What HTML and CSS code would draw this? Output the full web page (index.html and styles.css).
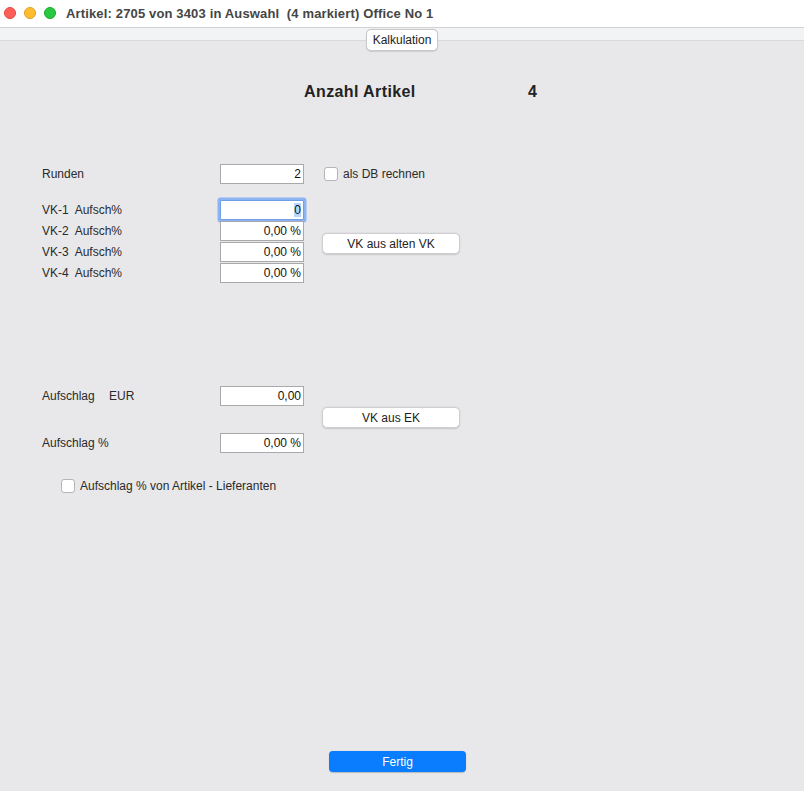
FILE: index.html
```html
<!DOCTYPE html>
<html lang="de">
<head>
<meta charset="utf-8">
<title>Kalkulation</title>
<link rel="stylesheet" href="styles.css">
</head>
<body>
<div class="window">
  <header class="titlebar">
    <div class="lights">
      <span class="light red"></span>
      <span class="light yellow"></span>
      <span class="light green"></span>
    </div>
    <div class="title">Artikel: 2705 von 3403 in Auswahl&nbsp; (4 markiert) Office No 1</div>
  </header>
  <div class="tabbar">
    <button class="tab">Kalkulation</button>
  </div>
  <main class="content">
    <div class="count">
      <span class="count-label">Anzahl Artikel</span>
      <span class="count-value">4</span>
    </div>

    <div class="row">
      <span class="label">Runden</span>
      <div class="field">2</div>
      <label class="check inline">
        <span class="box"></span>
        <span>als DB rechnen</span>
      </label>
    </div>

    <div class="grid vk">
      <span class="label">VK-1&nbsp; Aufsch%</span>
      <div class="field focus"><span class="sel">0</span></div>
      <span class="label">VK-2&nbsp; Aufsch%</span>
      <div class="field">0,00 %</div>
      <span class="label">VK-3&nbsp; Aufsch%</span>
      <div class="field">0,00 %</div>
      <span class="label">VK-4&nbsp; Aufsch%</span>
      <div class="field">0,00 %</div>
      <button class="btn vk-btn">VK aus alten VK</button>
    </div>

    <div class="grid aufschlag">
      <span class="label">Aufschlag <span class="unit">EUR</span></span>
      <div class="field">0,00</div>
      <span class="label">Aufschlag %</span>
      <div class="field">0,00 %</div>
      <button class="btn ek-btn">VK aus EK</button>
    </div>

    <label class="check check-row">
      <span class="box"></span>
      <span>Aufschlag % von Artikel - Lieferanten</span>
    </label>

    <footer class="footer">
      <button class="primary">Fertig</button>
    </footer>
  </main>
</div>
</body>
</html>
```

FILE: styles.css
```css
* { box-sizing: border-box; }

html, body {
  margin: 0;
  padding: 0;
}

body {
  font-family: "Liberation Sans", Arial, sans-serif;
  font-size: 12px;
  color: #222;
  background: #e8e8ea;
}

.window {
  width: 804px;
  height: 791px;
  display: flex;
  flex-direction: column;
  background: #e8e8ea;
  overflow: hidden;
}

.titlebar {
  height: 28px;
  flex: none;
  background: #ffffff;
  border-bottom: 1px solid #d2d2d4;
  display: flex;
  align-items: center;
  padding-left: 4px;
  padding-bottom: 1px;
}

.lights {
  display: flex;
  gap: 8px;
}

.light {
  width: 12px;
  height: 12px;
  border-radius: 50%;
  display: block;
}
.red { background: #fe5f57; border: 0.5px solid #e2463f; }
.yellow { background: #febc2e; border: 0.5px solid #dea123; }
.green { background: #28c840; border: 0.5px solid #1aab29; }

.title {
  margin-left: 10px;
  font-weight: bold;
  font-size: 13px;
  color: #454545;
  white-space: nowrap;
  letter-spacing: 0.15px;
}

.tabbar {
  height: 13px;
  flex: none;
  background: #f2f3f5;
  border-bottom: 1px solid #dadadc;
  display: flex;
  justify-content: center;
  align-items: flex-start;
}

.tab {
  margin-top: 1px;
  flex: none;
  width: 72px;
  height: 22px;
  padding: 0;
  font-family: inherit;
  font-size: 12px;
  color: #222;
  background: #ffffff;
  border: 1px solid #c8c8ca;
  border-radius: 5px;
  box-shadow: 0 0.5px 1px rgba(0,0,0,0.12);
}

.content {
  flex: 1;
  display: flex;
  flex-direction: column;
  padding-left: 42px;
}

.count {
  margin-top: 42px;
  padding-left: 262px;
  display: flex;
  font-size: 16px;
  font-weight: bold;
  line-height: 18px;
  color: #222;
  letter-spacing: 0.4px;
}
.count-label { width: 224px; }

.row {
  margin-top: 63px;
  display: flex;
  align-items: center;
  height: 20px;
}
.row .label { width: 178px; }

.label {
  line-height: 20px;
  white-space: nowrap;
  color: #2a2a2a;
}
.unit { margin-left: 11px; }

.field {
  width: 84px;
  height: 20px;
  background: #ffffff;
  border: 1px solid #a9a9ab;
  text-align: right;
  padding-right: 2px;
  line-height: 18px;
  color: #111;
}

.field.focus {
  border-color: #6f9ee6;
  box-shadow: 0 0 0 2.5px #8cb4f2;
  border-radius: 1px;
}
.sel { background: #b3d7ff; }

.check {
  display: flex;
  align-items: center;
  gap: 5px;
  color: #2a2a2a;
}
.check.inline { margin-left: 20px; }

.box {
  width: 14px;
  height: 14px;
  background: #ffffff;
  border: 1px solid #b5b5b7;
  border-radius: 3px;
  display: block;
  flex: none;
}

.grid {
  display: grid;
  grid-template-columns: 178px 84px 18px 138px;
}

.vk {
  margin-top: 16px;
  grid-template-rows: repeat(4, 20px);
  row-gap: 1px;
}
.grid .label { grid-column: 1; }
.grid .field { grid-column: 2; }

.aufschlag {
  margin-top: 103px;
  grid-template-rows: 20px 20px;
  row-gap: 27px;
}

.btn {
  grid-column: 4;
  align-self: center;
  height: 21px;
  padding: 0;
  font-family: inherit;
  font-size: 12px;
  color: #222;
  background: #ffffff;
  border: 1px solid #cfcfd1;
  border-radius: 5px;
  box-shadow: 0 0.5px 1.5px rgba(0,0,0,0.15);
}
.vk-btn { grid-row: 1 / 5; margin-top: 4px; }
.ek-btn { grid-row: 1 / 3; margin-bottom: 4px; }

.check-row {
  margin-top: 26px;
  padding-left: 19px;
  height: 14px;
}

.footer {
  margin-top: auto;
  padding-left: 287px;
  padding-bottom: 19px;
}

.primary {
  width: 137px;
  height: 21px;
  padding: 0;
  font-family: inherit;
  font-size: 12px;
  font-weight: 500;
  color: #ffffff;
  background: #0a7cfe;
  border: none;
  border-radius: 4px;
  box-shadow: 0 0.5px 1px rgba(0,0,0,0.2);
}
```
